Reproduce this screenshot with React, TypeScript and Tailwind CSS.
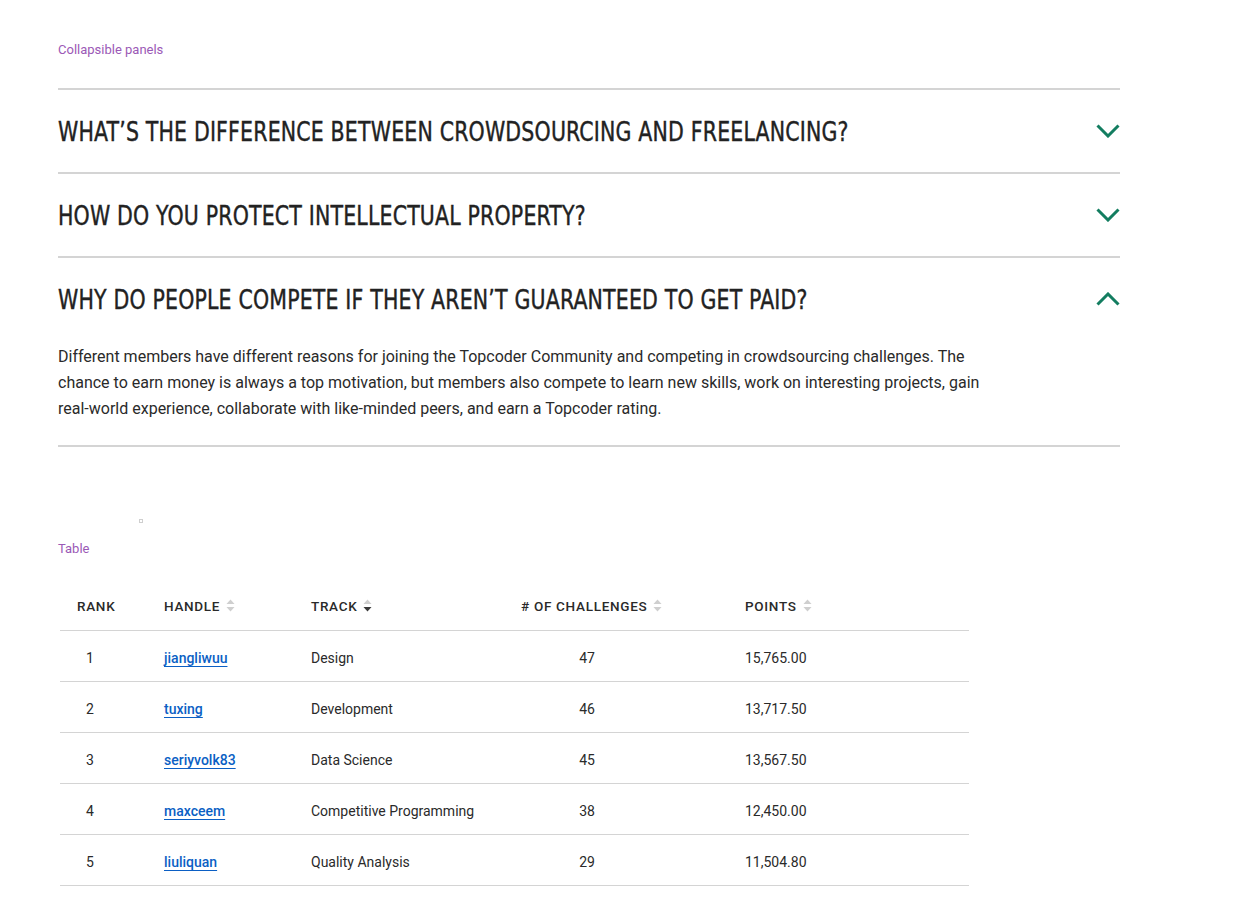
import React from "react";

const faqs = [
  { q: "What’s the difference between crowdsourcing and freelancing?", open: false },
  { q: "How do you protect intellectual property?", open: false },
  {
    q: "Why do people compete if they aren’t guaranteed to get paid?",
    open: true,
    a: "Different members have different reasons for joining the Topcoder Community and competing in crowdsourcing challenges. The chance to earn money is always a top motivation, but members also compete to learn new skills, work on interesting projects, gain real-world experience, collaborate with like-minded peers, and earn a Topcoder rating.",
  },
];

const rows = [
  { rank: 1, handle: "jiangliwuu", track: "Design", count: 47, points: "15,765.00" },
  { rank: 2, handle: "tuxing", track: "Development", count: 46, points: "13,717.50" },
  { rank: 3, handle: "seriyvolk83", track: "Data Science", count: 45, points: "13,567.50" },
  { rank: 4, handle: "maxceem", track: "Competitive Programming", count: 38, points: "12,450.00" },
  { rank: 5, handle: "liuliquan", track: "Quality Analysis", count: 29, points: "11,504.80" },
];

function Chevron({ up }: { up: boolean }) {
  return (
    <svg width="24" height="14" viewBox="0 0 24 14" className="shrink-0">
      <polyline
        points={up ? "1.5,12.5 12,2 22.5,12.5" : "1.5,1.5 12,12 22.5,1.5"}
        fill="none"
        stroke="#137d60"
        strokeWidth="3"
      />
    </svg>
  );
}

function SortIcon({ active }: { active?: boolean }) {
  return (
    <svg width="9" height="13" viewBox="0 0 9 13" className="ml-[6px] inline-block">
      <polygon points="4.5,0.5 8.5,5 0.5,5" fill="#cfcfcf" />
      <polygon points="0.5,8 8.5,8 4.5,12.5" fill={active ? "#3a3a3a" : "#cfcfcf"} />
    </svg>
  );
}

export default function App() {
  return (
    <div className="min-h-screen bg-white pl-[58px] pt-[41px] font-['Roboto',sans-serif] text-[#2a2a2a]">
      <p className="text-[13px] leading-[18px] text-[#9b59b6]">Collapsible panels</p>

      <div className="mt-[29px] w-[1062px] border-t-2 border-[#d4d4d4]">
        {faqs.map((f) => (
          <div key={f.q} className="border-b-2 border-[#d4d4d4]">
            <div className="flex h-[82px] items-center justify-between">
              <h3 className="origin-left font-['DejaVu_Sans_Condensed','Liberation_Sans',sans-serif] text-[27px] uppercase leading-none tracking-[0.2px] text-[#222] [transform:scaleX(0.845)] [-webkit-text-stroke:0.4px_#222]">
                {f.q}
              </h3>
              <Chevron up={f.open} />
            </div>
            {f.a && (
              <p className="mt-[4px] mb-[23px] w-[940px] text-[16px] leading-[26px] text-[#2a2a2a]">{f.a}</p>
            )}
          </div>
        ))}
      </div>

      <div className="mt-[72px] ml-[81px] h-[4px] w-[4px] border border-[#cfcfcf]" />
      <p className="mt-[17px] text-[13px] leading-[18px] text-[#9b59b6]">Table</p>

      <table className="ml-[2px] mt-[24px] w-[909px] border-collapse text-left">
        <thead>
          <tr className="h-[48px] border-b border-[#d4d4d4] text-[13.5px] uppercase tracking-[0.7px] text-[#2a2a2a]">
            <th className="w-[104px] pl-[17px] font-medium">Rank</th>
            <th className="w-[147px] font-medium">
              <span className="inline-flex items-center">Handle<SortIcon /></span>
            </th>
            <th className="w-[210px] font-medium">
              <span className="inline-flex items-center">Track<SortIcon active /></span>
            </th>
            <th className="w-[224px] font-medium">
              <span className="inline-flex items-center"># of Challenges<SortIcon /></span>
            </th>
            <th className="font-medium">
              <span className="inline-flex items-center">Points<SortIcon /></span>
            </th>
          </tr>
        </thead>
        <tbody className="text-[14px] text-[#2a2a2a]">
          {rows.map((r) => (
            <tr key={r.rank} className="h-[51px] border-b border-[#d4d4d4] [&>td]:pt-[6px]">
              <td className="pl-[26px]">{r.rank}</td>
              <td>
                <a href="#" className="font-medium text-[#0b5fc4] underline underline-offset-[3px]">
                  {r.handle}
                </a>
              </td>
              <td>{r.track}</td>
              <td>
                <span className="block w-[132px] text-center">{r.count}</span>
              </td>
              <td>{r.points}</td>
            </tr>
          ))}
        </tbody>
      </table>
    </div>
  );
}
